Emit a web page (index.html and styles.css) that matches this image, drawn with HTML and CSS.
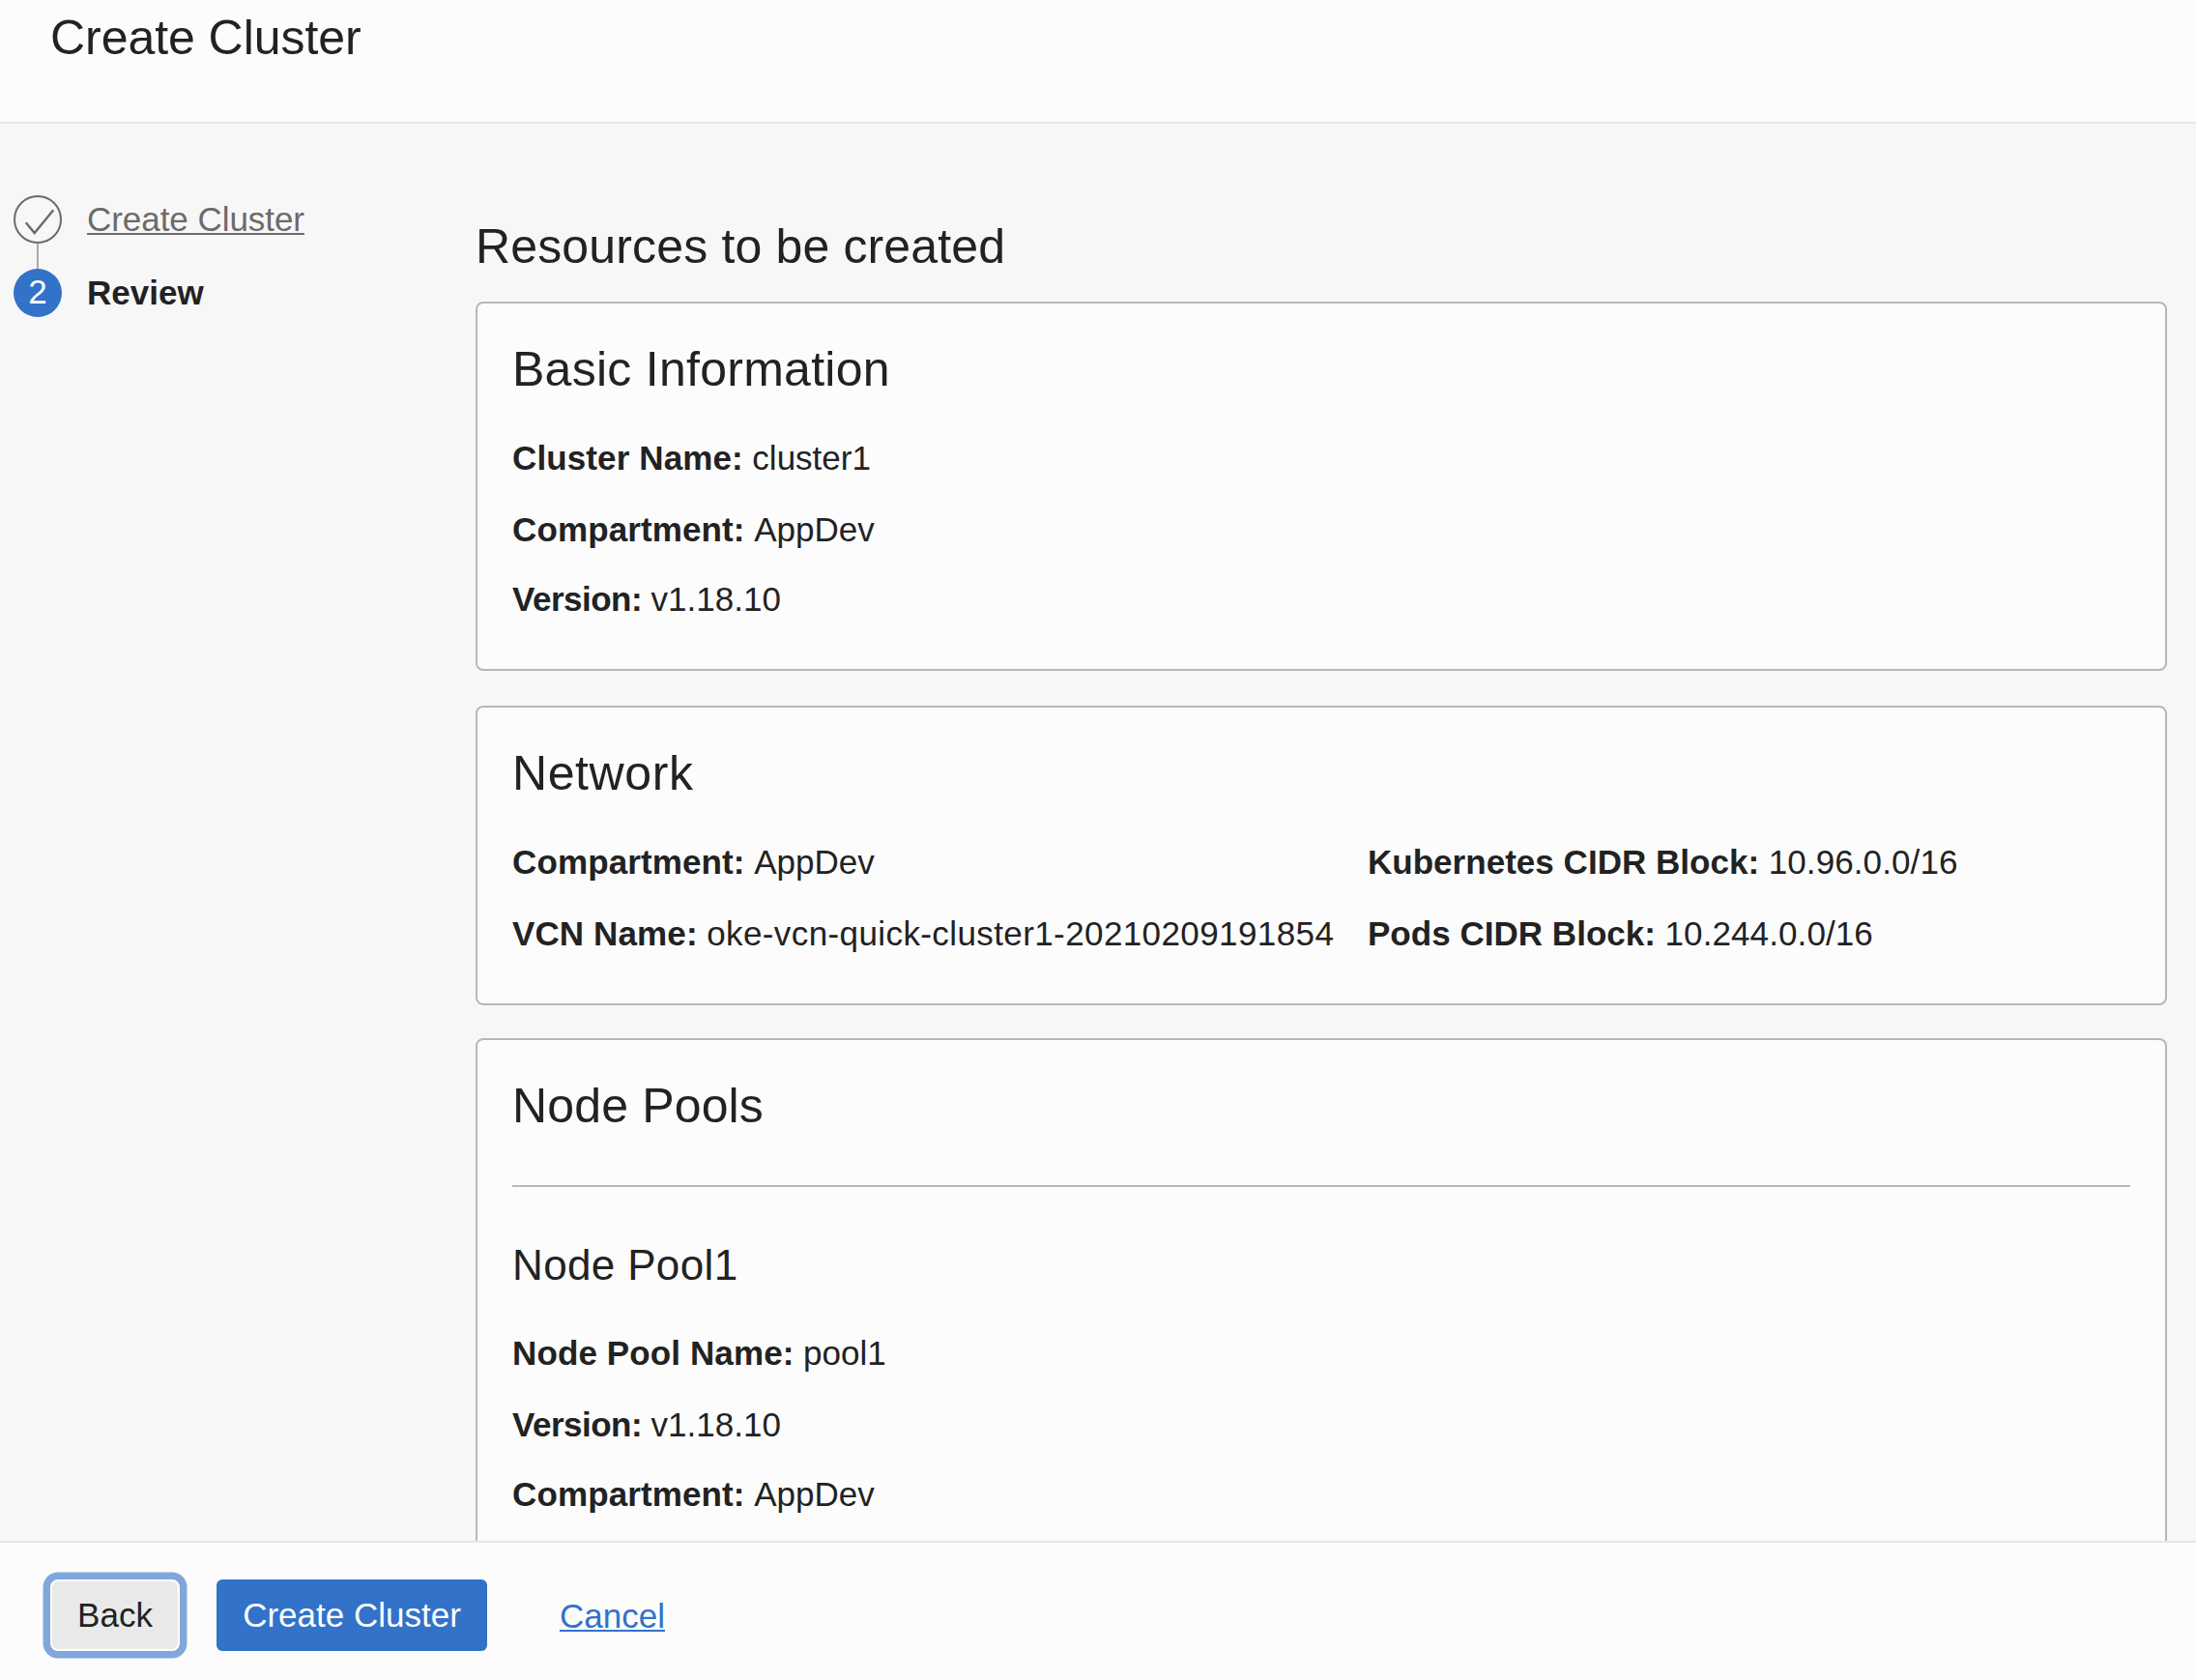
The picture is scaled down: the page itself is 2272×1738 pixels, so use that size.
FILE: index.html
```html
<!DOCTYPE html>
<html lang="en">
<head>
<meta charset="utf-8">
<title>Create Cluster</title>
<link rel="stylesheet" href="styles.css">
</head>
<body>
<header class="header"><h1 class="title page-title">Create Cluster</h1></header>
<div class="body">
  <nav class="steps">
    <div class="step">
      <svg class="step-icon" viewBox="0 0 50 50"><circle cx="25" cy="25" r="24" fill="none" stroke="#6b6b6b" stroke-width="2"/><path d="M12.8 28.2 21.7 39 41.3 15.2" fill="none" stroke="#6b6b6b" stroke-width="2.4"/></svg>
      <a class="step-link" href="#">Create Cluster</a>
    </div>
    <div class="connector"></div>
    <div class="step">
      <span class="step-number">2</span>
      <span class="step-current">Review</span>
    </div>
  </nav>
  <main class="main">
    <h2 class="title section-title">Resources to be created</h2>
    <section class="card">
      <h3 class="title card-title">Basic Information</h3>
      <div class="rows">
        <p class="row"><b class="label">Cluster Name:</b><span class="value">cluster1</span></p>
        <p class="row"><b class="label">Compartment:</b><span class="value">AppDev</span></p>
        <p class="row"><b class="label label-tight">Version:</b><span class="value">v1.18.10</span></p>
      </div>
    </section>
    <section class="card">
      <h3 class="title card-title network-title">Network</h3>
      <div class="columns">
        <div class="rows">
          <p class="row"><b class="label">Compartment:</b><span class="value">AppDev</span></p>
          <p class="row"><b class="label">VCN Name:</b><span class="value value-id">oke-vcn-quick-cluster1-20210209191854</span></p>
        </div>
        <div class="rows">
          <p class="row"><b class="label label-cidr">Kubernetes CIDR Block:</b><span class="value value-cidr">10.96.0.0/16</span></p>
          <p class="row"><b class="label label-cidr">Pods CIDR Block:</b><span class="value value-cidr">10.244.0.0/16</span></p>
        </div>
      </div>
    </section>
    <section class="card">
      <h3 class="title pools-title">Node Pools</h3>
      <hr class="divider">
      <h4 class="pool-title">Node Pool1</h4>
      <div class="rows">
        <p class="row"><b class="label">Node Pool Name:</b><span class="value">pool1</span></p>
        <p class="row"><b class="label label-tight">Version:</b><span class="value">v1.18.10</span></p>
        <p class="row"><b class="label">Compartment:</b><span class="value">AppDev</span></p>
      </div>
    </section>
  </main>
</div>
<footer class="footer">
  <button class="button button-back">Back</button>
  <button class="button button-primary">Create Cluster</button>
  <a class="cancel" href="#">Cancel</a>
</footer>
</body>
</html>
```

FILE: styles.css
```css
* { box-sizing: border-box; margin: 0; padding: 0; }
html, body { height: 100%; }
body {
  display: flex;
  flex-direction: column;
  overflow: hidden;
  background: #f7f7f7;
  color: #222;
  font: 35px/42px "Liberation Sans", Arial, sans-serif;
}
.header {
  flex: none;
  height: 128px;
  padding: 9px 52px 0;
  background: #fcfcfc;
  border-bottom: 2px solid #e6e6e6;
}
.title { font-size: 50px; line-height: 60px; font-weight: 400; }
.page-title { letter-spacing: -.05px; }
.body { flex: 1; min-height: 0; display: flex; overflow: hidden; }
.steps { flex: none; width: 492px; padding: 74px 0 0 14px; }
.step { display: flex; align-items: center; gap: 26px; height: 50px; }
.step-icon { flex: none; width: 50px; height: 50px; display: block; }
.step-link {
  color: #6b6b6b;
  letter-spacing: -.05px;
  text-decoration-thickness: 2px;
  text-underline-offset: 2px;
  text-decoration-skip-ink: none;
}
.connector { width: 2px; height: 26px; margin-left: 24px; background: #aaa; }
.step-number {
  width: 50px;
  height: 50px;
  border-radius: 50%;
  background: #3272c8;
  color: #fff;
  text-align: center;
  line-height: 48px;
}
.step-current { font-weight: 700; }
.main { flex: none; width: 1750px; padding-top: 97px; }
.section-title { margin-bottom: 27px; letter-spacing: .15px; }
.card {
  margin-bottom: 36px;
  padding: 38px 36px 51px;
  background: #fcfcfc;
  border: 2px solid #b4b8be;
  border-radius: 8px;
}
.card + .card { margin-bottom: 34px; }
.card-title { line-height: 61px; margin-bottom: 40px; letter-spacing: .27px; }
.network-title { letter-spacing: .6px; }
.pools-title { line-height: 61px; margin-bottom: 51px; letter-spacing: .15px; }
.pool-title { margin: 54px 0 43px; font-size: 44px; line-height: 54px; font-weight: 400; letter-spacing: .35px; }
.divider { border: 0; height: 2px; background: #b4b8be; }
.columns { display: grid; grid-template-columns: 885px 1fr; }
.row { display: flex; gap: 9.5px; height: 74px; white-space: nowrap; }
.row:nth-child(2) { height: 72px; }
.row:last-child { height: 42px; }
.label { letter-spacing: .12px; }
.label-tight { letter-spacing: -.5px; }
.label-cidr { letter-spacing: .03px; }
.value-id { letter-spacing: .4px; }
.value-cidr { letter-spacing: .1px; }
.footer {
  flex: none;
  display: flex;
  align-items: flex-start;
  height: 144px;
  padding: 38px 52px 0;
  background: #fcfcfc;
  border-top: 2px solid #e6e6e6;
}
.button { height: 74px; border: 0; font: inherit; line-height: 74px; }
.button-back {
  width: 134px;
  margin-right: 38px;
  line-height: 70px;
  border: 2px solid #fff;
  border-radius: 8px;
  background: #e9e9e9;
  color: #222;
  box-shadow: 0 0 0 7.5px #80a7db;
}
.button-primary {
  width: 280px;
  margin-right: 75px;
  border-radius: 6px;
  background: #3272c8;
  color: #fff;
}
.cancel {
  line-height: 75px;
  color: #3272c8;
  text-decoration-thickness: 2px;
  text-underline-offset: 2px;
}
```
